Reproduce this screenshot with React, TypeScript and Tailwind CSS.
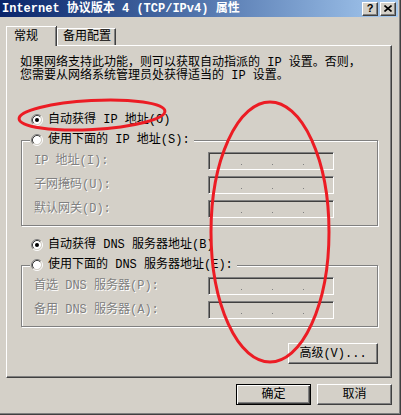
import React from 'react';

const raised =
  'border border-t-white border-l-white border-b-[#404040] border-r-[#404040] shadow-[inset_-1px_-1px_0_#808080]';
const sunken =
  'border border-t-[#808080] border-l-[#808080] border-b-white border-r-white shadow-[inset_1px_1px_0_#404040,inset_-1px_-1px_0_#D4D0C8]';
const etched = 'border border-[#808080] shadow-[inset_1px_1px_0_#fff,1px_1px_0_#fff]';
const grey = 'text-[#808080] [text-shadow:1px_1px_0_#fff]';

function Radio({ checked }: { checked?: boolean }) {
  return (
    <svg width="12" height="12" viewBox="0 0 12 12" className="shrink-0">
      <circle cx="6" cy="6" r="4.2" fill="#fff" />
      <path d="M2.1 9.9A5.5 5.5 0 0 1 9.9 2.1" fill="none" stroke="#808080" />
      <path d="M9.9 2.1A5.5 5.5 0 0 1 2.1 9.9" fill="none" stroke="#fff" />
      <path d="M2.82 9.18A4.5 4.5 0 0 1 9.18 2.82" fill="none" stroke="#404040" />
      <path d="M9.18 2.82A4.5 4.5 0 0 1 2.82 9.18" fill="none" stroke="#D4D0C8" />
      {checked && <circle cx="6" cy="6" r="2" fill="#000" />}
    </svg>
  );
}

function IpBox() {
  return (
    <div className={`w-[126px] h-[18px] ${sunken} bg-[#D4D0C8] flex items-end pl-[32px] pb-[4px] gap-[30px]`}>
      <span className="w-px h-px bg-[#808080]" />
      <span className="w-px h-px bg-[#808080]" />
      <span className="w-px h-px bg-[#808080]" />
    </div>
  );
}

function Field({ label }: { label: string }) {
  return (
    <div className="flex items-center h-[18px] pl-[12px]">
      <span className={`w-[174px] ${grey}`}>{label}</span>
      <IpBox />
    </div>
  );
}

function RadioRow({ label, checked }: { label: string; checked?: boolean }) {
  return (
    <div className="flex items-center gap-[5px] h-[16px] pl-[10px]">
      <Radio checked={checked} />
      <span>{label}</span>
    </div>
  );
}

function Group({ legend, fields }: { legend: string; fields: string[] }) {
  return (
    <div className={`w-[357px] ${etched} pb-[7px]`}>
      <div className="-mt-[9px] ml-[8px] w-fit bg-[#D4D0C8] pl-[1px] pr-[4px] flex items-center gap-[5px] h-[16px]">
        <Radio />
        <span>{legend}</span>
      </div>
      <div className="mt-[4px] flex flex-col gap-[6px]">
        {fields.map((f) => (
          <Field key={f} label={f} />
        ))}
      </div>
    </div>
  );
}

export default function App() {
  return (
    <div className="relative w-[401px] h-[415px] overflow-hidden bg-[#D4D0C8] text-black text-[12px] leading-[16px] font-['Liberation_Mono','Noto_Sans_CJK_SC',monospace] shadow-[inset_-1px_-1px_0_#404040,inset_-2px_-2px_0_#808080]">
      {/* title bar */}
      <div className="mr-[3px] h-[17px] flex items-center justify-between bg-linear-to-r from-[#0A246A] to-[#A6CAF0] pl-[2px] pr-[2px]">
        <span className="text-white font-bold whitespace-nowrap">Internet 协议版本 4 (TCP/IPv4) 属性</span>
        <div className="flex gap-[2px]">
          <div className={`w-[16px] h-[14px] ${raised} bg-[#D4D0C8] flex items-center justify-center font-['Liberation_Sans',sans-serif] font-bold text-[11px] leading-none`}>
            ?
          </div>
          <div className={`w-[16px] h-[14px] ${raised} bg-[#D4D0C8] flex items-center justify-center`}>
            <svg width="8" height="7" viewBox="0 0 8 7">
              <path d="M0.5 0.5L7.5 6.5M7.5 0.5L0.5 6.5" stroke="#000" strokeWidth="1.6" />
            </svg>
          </div>
        </div>
      </div>

      {/* tabs */}
      <div className="mt-[9px] h-[19px] pl-[6px] flex items-end">
        <div className="relative z-10 -mb-[1px] h-[20px] w-[50px] border-t border-l border-white shadow-[inset_-1px_0_0_#808080,1px_0_0_#404040] bg-[#D4D0C8] pl-[7px] pt-[2px]">
          常规
        </div>
        <div className="h-[17px] w-[59px] ml-[1px] border-t border-l border-white border-r border-r-[#404040] shadow-[inset_-1px_0_0_#808080] pl-[5px] leading-[16px]">
          备用配置
        </div>
      </div>

      {/* panel */}
      <div className={`ml-[6px] w-[386px] h-[333px] ${raised} pl-[14px] flex flex-col`}>
        <p className="-ml-[1px] mt-[11px] leading-[13px] whitespace-nowrap">
          如果网络支持此功能，则可以获取自动指派的 IP 设置。否则，
          <br />
          您需要从网络系统管理员处获得适当的 IP 设置。
        </p>

        <div className="mt-[29px]">
          <RadioRow label="自动获得 IP 地址(O)" checked />
        </div>
        <div className="mt-[12px]">
          <Group legend="使用下面的 IP 地址(S):" fields={['IP 地址(I):', '子网掩码(U):', '默认网关(D):']} />
        </div>

        <div className="mt-[11px]">
          <RadioRow label="自动获得 DNS 服务器地址(B)" checked />
        </div>
        <div className="mt-[12px]">
          <Group legend="使用下面的 DNS 服务器地址(E):" fields={['首选 DNS 服务器(P):', '备用 DNS 服务器(A):']} />
        </div>

        <div className="w-[357px] mt-[16px] flex justify-end">
          <button className={`w-[90px] h-[21px] ${raised} bg-[#D4D0C8] flex items-center justify-center`}>
            高级(V)...
          </button>
        </div>
      </div>

      {/* dialog buttons */}
      <div className="mt-[6px] pr-[9px] flex justify-end gap-[6px]">
        <button className="w-[75px] h-[21px] border border-black shadow-[inset_1px_1px_0_#fff,inset_-1px_-1px_0_#404040,inset_-2px_-2px_0_#808080] bg-[#D4D0C8] flex items-center justify-center">
          确定
        </button>
        <button className={`w-[75px] h-[21px] ${raised} bg-[#D4D0C8] flex items-center justify-center`}>
          取消
        </button>
      </div>

      {/* red annotation ellipses */}
      <svg className="absolute inset-0 pointer-events-none" width="401" height="415" viewBox="0 0 401 415">
        <ellipse cx="92" cy="115" rx="73" ry="14.5" fill="none" stroke="#EC1C24" strokeWidth="3" transform="rotate(-3 92 115)" />
        <ellipse cx="270" cy="232" rx="59" ry="130" fill="none" stroke="#EC1C24" strokeWidth="3" />
      </svg>
    </div>
  );
}
